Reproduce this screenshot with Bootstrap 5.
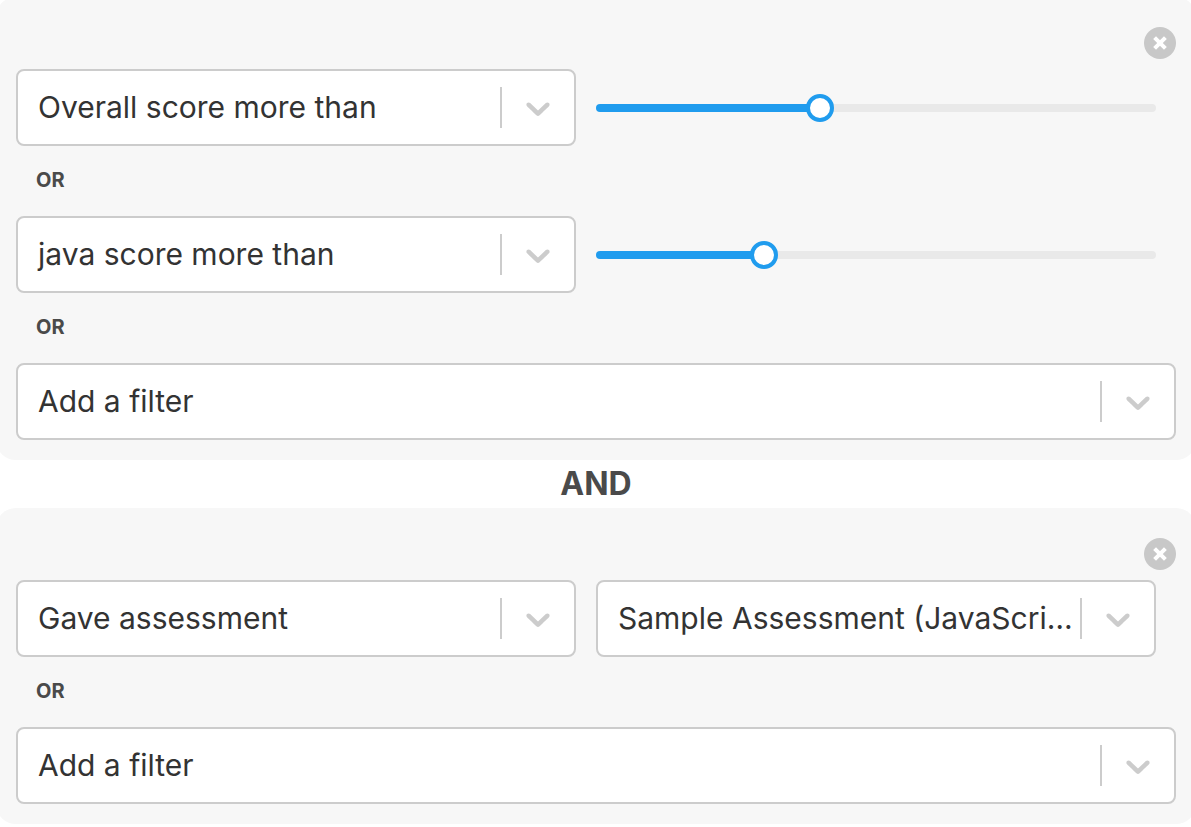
<!DOCTYPE html>
<html lang="en">
<head>
<meta charset="utf-8">
<meta name="viewport" content="width=device-width, initial-scale=1">
<title>Candidate filters</title>
<link href="https://cdn.jsdelivr.net/npm/bootstrap@5.3.0/dist/css/bootstrap.min.css" rel="stylesheet">
<style>
  body { font-family: Inter, "Liberation Sans", sans-serif; color: #333; background: #fff; overflow-x: hidden; }
  main { margin: -3px -5px 0 -4px; }
  .filter-group { background: #f7f7f7; border-radius: 20px; padding: 30px 20px 20px; }
  .filter-close { width: 32px; height: 32px; margin-bottom: 10px; }
  .filter-close svg { display: block; }
  .filter-pair { display: grid; grid-template-columns: 1fr 1fr; gap: 20px; margin-right: 20px; }
  .filter-select {
    height: 77px; border: 2px solid #ccc; border-radius: 8px; padding: 0 80px 2px 18px; text-indent: 2px;
    font-size: 30px; line-height: 40px; color: #333; background-color: #fff;
    background-image: url("data:image/svg+xml,%3Csvg xmlns='http://www.w3.org/2000/svg' width='74' height='73'%3E%3Cpath fill='%23ccc' d='M0 16h2v41H0z'/%3E%3Cpath fill='%23ccc' transform='translate(18 17) scale(2)' d='M4.516 7.548c.436-.446 1.043-.481 1.576 0L10 11.295l3.908-3.747c.533-.481 1.141-.446 1.574 0 .436.445.408 1.197 0 1.615-.406.418-4.695 4.502-4.695 4.502-.217.223-.502.335-.787.335s-.57-.112-.789-.335c0 0-4.287-4.084-4.695-4.502s-.436-1.17 0-1.615z'/%3E%3C/svg%3E");
    background-size: 74px 73px; background-position: right center;
    overflow: hidden; text-overflow: ellipsis; white-space: nowrap;
  }
  .filter-or { height: 70px; padding: 0 20px 2px; font-size: 20px; line-height: 24px; color: #4a4a4a; }
  .filter-and { height: 48px; font-size: 32px; line-height: 40px; color: #4a4a4a; }
  .score-slider { display: grid; align-items: center; }
  .score-slider::before, .score-slider input { grid-area: 1 / 1; }
  .score-slider::before {
    content: ""; height: 8px; border-radius: 4px;
    background: linear-gradient(to right, #209cee var(--score), #e9e9e9 var(--score));
  }
  /* the input overhangs by half a thumb so that the thumb's centre follows the bar */
  .score-slider input { appearance: none; width: calc(100% + 28px); margin: 0 -14px; height: 28px; background: transparent; }
  .score-slider input::-webkit-slider-thumb { appearance: none; width: 28px; height: 28px; border: 4px solid #209cee; border-radius: 50%; background: #fff; }
  .score-slider input::-moz-range-thumb { box-sizing: border-box; width: 28px; height: 28px; border: 4px solid #209cee; border-radius: 50%; background: #fff; }
</style>
</head>
<body>
<main>
  <section class="filter-group" aria-label="Filter group 1">
    <div class="d-flex justify-content-end">
      <button type="button" class="filter-close btn p-0 border-0" aria-label="Remove group 1">
        <svg width="32" height="32" viewBox="0 0 32 32"><circle cx="16" cy="16" r="16" fill="#c8c8c8"/><path d="M10.6 10.6l10.8 10.8M21.4 10.6L10.6 21.4" stroke="#fff" stroke-width="4"/></svg>
      </button>
    </div>
    <div class="filter-pair">
      <select class="filter-select form-select" aria-label="Filter 1"><option>Overall score more than</option></select>
      <div class="score-slider" style="--score: 40%"><input type="range" min="0" max="100" value="40" aria-label="Overall score"></div>
    </div>
    <div class="filter-or d-flex align-items-center fw-bold">OR</div>
    <div class="filter-pair">
      <select class="filter-select form-select" aria-label="Filter 2"><option>java score more than</option></select>
      <div class="score-slider" style="--score: 30%"><input type="range" min="0" max="100" value="30" aria-label="java score"></div>
    </div>
    <div class="filter-or d-flex align-items-center fw-bold">OR</div>
    <select class="filter-select form-select" aria-label="Add a filter to group 1"><option>Add a filter</option></select>
  </section>

  <div class="filter-and d-flex align-items-center justify-content-center fw-bold">AND</div>

  <section class="filter-group" aria-label="Filter group 2">
    <div class="d-flex justify-content-end">
      <button type="button" class="filter-close btn p-0 border-0" aria-label="Remove group 2">
        <svg width="32" height="32" viewBox="0 0 32 32"><circle cx="16" cy="16" r="16" fill="#c8c8c8"/><path d="M10.6 10.6l10.8 10.8M21.4 10.6L10.6 21.4" stroke="#fff" stroke-width="4"/></svg>
      </button>
    </div>
    <div class="filter-pair">
      <select class="filter-select form-select" aria-label="Filter 3"><option>Gave assessment</option></select>
      <select class="filter-select form-select" aria-label="Assessment"><option>Sample Assessment (JavaScript)</option></select>
    </div>
    <div class="filter-or d-flex align-items-center fw-bold">OR</div>
    <select class="filter-select form-select" aria-label="Add a filter to group 2"><option>Add a filter</option></select>
  </section>
</main>
<script src="https://cdn.jsdelivr.net/npm/bootstrap@5.3.0/dist/js/bootstrap.bundle.min.js"></script>
</body>
</html>
